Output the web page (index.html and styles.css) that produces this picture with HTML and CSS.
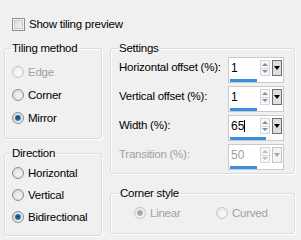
FILE: index.html
```html
<!DOCTYPE html>
<html>
<head>
<meta charset="utf-8">
<link rel="stylesheet" href="styles.css">
</head>
<body>
<div class="page">
  <div class="check-row">
    <span class="checkbox"></span>
    <span class="label">Show tiling preview</span>
  </div>
  <div class="columns">
    <div class="col-left">
      <fieldset class="group tiling">
        <legend>Tiling method</legend>
        <div class="radios">
          <div class="radio-row disabled"><span class="radio"></span><span>Edge</span></div>
          <div class="radio-row"><span class="radio"></span><span>Corner</span></div>
          <div class="radio-row"><span class="radio checked"></span><span>Mirror</span></div>
        </div>
      </fieldset>
      <fieldset class="group direction">
        <legend>Direction</legend>
        <div class="radios dir">
          <div class="radio-row"><span class="radio"></span><span>Horizontal</span></div>
          <div class="radio-row"><span class="radio"></span><span>Vertical</span></div>
          <div class="radio-row"><span class="radio checked"></span><span>Bidirectional</span></div>
        </div>
      </fieldset>
    </div>
    <div class="col-right">
      <fieldset class="group settings">
        <legend>Settings</legend>
        <div class="rows">
          <div class="row">
            <span class="row-label">Horizontal offset (%):</span>
            <div class="spin">
              <div class="spin-top">
                <span class="value">1</span>
                <span class="arrows"><span class="up"></span><span class="down"></span></span>
                <span class="drop"></span>
              </div>
              <div class="bar" style="width:27px"></div>
            </div>
          </div>
          <div class="row">
            <span class="row-label">Vertical offset (%):</span>
            <div class="spin">
              <div class="spin-top">
                <span class="value">1</span>
                <span class="arrows"><span class="up"></span><span class="down"></span></span>
                <span class="drop"></span>
              </div>
              <div class="bar" style="width:27px"></div>
            </div>
          </div>
          <div class="row">
            <span class="row-label">Width (%):</span>
            <div class="spin">
              <div class="spin-top">
                <span class="value">65<span class="caret"></span></span>
                <span class="arrows"><span class="up"></span><span class="down"></span></span>
                <span class="drop"></span>
              </div>
              <div class="bar" style="width:36px"></div>
            </div>
          </div>
          <div class="row disabled">
            <span class="row-label">Transition (%):</span>
            <div class="spin">
              <div class="spin-top">
                <span class="value">50</span>
                <span class="arrows"><span class="up"></span><span class="down"></span></span>
                <span class="drop"></span>
              </div>
              <div class="bar" style="width:27px"></div>
            </div>
          </div>
        </div>
      </fieldset>
      <fieldset class="group corner">
        <legend>Corner style</legend>
        <div class="corner-radios">
          <div class="radio-row disabled"><span class="radio checked"></span><span>Linear</span></div>
          <div class="radio-row disabled"><span class="radio"></span><span>Curved</span></div>
        </div>
      </fieldset>
    </div>
  </div>
</div>
</body>
</html>
```

FILE: styles.css
```css
html, body {
  margin: 0;
  padding: 0;
  background: #f0f0f0;
}
body {
  font-family: "Liberation Sans", Arial, sans-serif;
  font-size: 11.5px;
  letter-spacing: -0.25px;
  color: #000;
  width: 301px;
  height: 240px;
  overflow: hidden;
  white-space: nowrap;
}
.page {
  padding: 17px 0 0 4px;
}
.check-row {
  display: flex;
  align-items: center;
  height: 14px;
  margin-left: 8px;
  gap: 4px;
}
.checkbox {
  width: 11px;
  height: 11px;
  border: 1px solid #8f8f8f;
  background: linear-gradient(135deg, #d4d7db, #f7f7f7);
  box-shadow: inset 0 0 0 1px #f4f4f4, inset 0 0 0 2px #c8ccd1;
}
.columns {
  display: flex;
  margin-top: 10px;
  gap: 8px;
}
.col-left {
  width: 98px;
  display: flex;
  flex-direction: column;
  gap: 7px;
}
.col-right {
  width: 185px;
  display: flex;
  flex-direction: column;
  gap: 12px;
}
.group {
  margin: 0;
  border: 1px solid #d5dfe5;
  border-radius: 3px;
  box-shadow: inset 1px 1px 0 #fff, 1px 1px 0 #fff;
  min-width: 0;
}
.group legend {
  padding: 0 1px;
  margin-left: -1px;
  line-height: 14px;
  height: 14px;
}
.tiling {
  padding: 10px 0 13px 7px;
}
.direction {
  padding: 6px 0 11px 7px;
}
.radios {
  display: flex;
  flex-direction: column;
  gap: 9px;
}
.radios.dir {
  gap: 8px;
}
.radio-row {
  display: flex;
  align-items: center;
  height: 14px;
  gap: 4px;
}
.radio {
  box-sizing: border-box;
  width: 12px;
  height: 12px;
  border-radius: 50%;
  border: 1px solid #8c8e90;
  background: radial-gradient(circle at 60% 60%, #f6f6f6 0%, #e2e3e4 55%, #c9cbcd 100%);
  display: flex;
  align-items: center;
  justify-content: center;
}
.radio.checked::after {
  content: "";
  width: 6px;
  height: 6px;
  border-radius: 50%;
  background: radial-gradient(circle at 45% 45%, #0c3f66 0%, #1d6fa6 45%, #56b3e6 100%);
}
.disabled {
  color: #a0a0a0;
}
.disabled .radio {
  border-color: #c4c5c6;
  background: radial-gradient(circle at 60% 60%, #fbfbfb 0%, #eeeeee 60%, #e0e0e0 100%);
}
.disabled .radio.checked::after {
  background: radial-gradient(circle at 45% 45%, #9a9a9a 0%, #b5b5b5 60%, #d2d2d2 100%);
}
.settings {
  padding: 2px 0 3px 8px;
}
.rows {
  display: flex;
  flex-direction: column;
  gap: 3px;
}
.row {
  display: flex;
  align-items: flex-start;
}
.row-label {
  width: 109px;
  line-height: 14px;
  padding-top: 3px;
}
.spin {
  box-sizing: border-box;
  width: 56px;
  height: 26px;
  border: 1px solid #c9c9c9;
  background: #fff;
  display: flex;
  flex-direction: column;
  padding: 1px 1px 0 1px;
}
.spin-top {
  display: flex;
  align-items: flex-start;
  height: 18px;
}
.value {
  flex: 1;
  line-height: 14px;
  padding: 2px 0 0 1px;
  display: flex;
  align-items: center;
  font-size: 12px;
  letter-spacing: 0;
}
.caret {
  width: 1px;
  height: 12px;
  background: #000;
}
.arrows {
  box-sizing: border-box;
  width: 10px;
  height: 16px;
  margin-top: 1px;
  border: 1px solid #d6d6d6;
  background: #f7f7f7;
  display: flex;
  flex-direction: column;
}
.arrows .up, .arrows .down {
  flex: 1;
  display: flex;
  align-items: center;
  justify-content: center;
}
.arrows .up {
  border-bottom: 1px solid #d6d6d6;
}
.arrows .up::after {
  content: "";
  border-left: 3px solid transparent;
  border-right: 3px solid transparent;
  border-bottom: 3px solid #7e8ea8;
}
.arrows .down::after {
  content: "";
  border-left: 3px solid transparent;
  border-right: 3px solid transparent;
  border-top: 3px solid #7e8ea8;
}
.drop {
  box-sizing: border-box;
  width: 10px;
  height: 16px;
  margin: 1px 0 0 2px;
  border: 1px solid #6e6e6e;
  background: #dedede;
  display: flex;
  align-items: center;
  justify-content: center;
}
.drop::after {
  content: "";
  border-left: 3px solid transparent;
  border-right: 3px solid transparent;
  border-top: 4px solid #000;
}
.disabled .arrows .up::after { border-bottom-color: #b8c0cc; }
.disabled .arrows .down::after { border-top-color: #b8c0cc; }
.disabled .drop {
  border-color: #c4c4c4;
  background: #f4f4f4;
}
.disabled .drop::after { border-top-color: #a8a8a8; }
.bar {
  height: 3px;
  margin-top: 2px;
  background: #3a8fde;
}
.corner {
  padding: 6px 0 13px 9px;
}
.corner-radios {
  display: flex;
  margin-left: 14px;
}
.corner-radios .radio-row:first-child {
  width: 82px;
}
```
